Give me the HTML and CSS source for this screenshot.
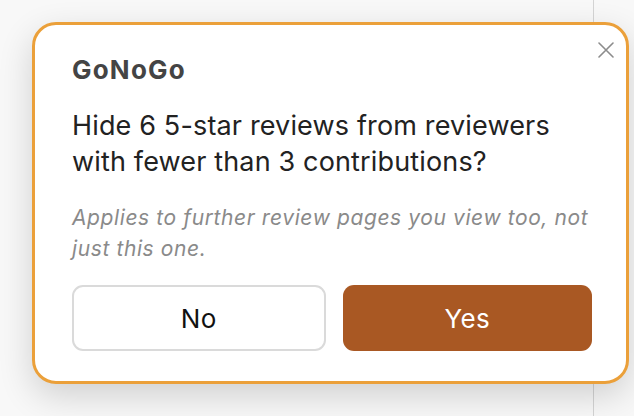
FILE: index.html
```html
<!DOCTYPE html>
<html lang="en">
<head>
<meta charset="utf-8">
<title>GoNoGo</title>
<link rel="stylesheet" href="styles.css">
</head>
<body>
<div class="page">
  <div class="page-main"></div>
  <div class="page-side"></div>
</div>
<div class="dialog" role="dialog">
  <button class="close" aria-label="Close">
    <svg width="16" height="16" viewBox="0 0 16 16"><path d="M1 1L15 15M15 1L1 15" stroke="#8c8c8c" stroke-width="1.6" stroke-linecap="round" fill="none"/></svg>
  </button>
  <div class="brand">GoNoGo</div>
  <p class="question">Hide 6 5-star reviews from reviewers with fewer than 3 contributions?</p>
  <p class="note">Applies to further review pages you view too, not just this one.</p>
  <div class="actions">
    <button class="btn btn-no">No</button>
    <button class="btn btn-yes">Yes</button>
  </div>
</div>
</body>
</html>
```
FILE: styles.css
```css
html, body {
  margin: 0;
  padding: 0;
  height: 100%;
}
body {
  background: #f8f8f8;
  font-family: Inter, "Noto Sans", sans-serif;
  overflow: hidden;
}
.page {
  display: flex;
  height: 416px;
}
.page-main {
  width: 593px;
  border-right: 1px solid #d4d4d4;
}
.page-side {
  flex: 1;
}
.dialog {
  position: absolute;
  left: 32px;
  top: 22px;
  width: 597px;
  box-sizing: border-box;
  background: #fff;
  border: 3px solid #eba03a;
  border-radius: 24px;
  padding: 30px 34px 30px 37px;
  box-shadow: 0 12px 34px rgba(0, 0, 0, 0.16);
}
.close {
  position: absolute;
  top: 17px;
  right: 12px;
  width: 16px;
  height: 16px;
  padding: 0;
  border: 0;
  background: none;
  display: flex;
}
.brand {
  font-size: 26px;
  line-height: 30px;
  font-weight: 700;
  letter-spacing: 1.2px;
  color: #444;
}
.question {
  margin: 23px 0 0;
  font-size: 27px;
  line-height: 36px;
  letter-spacing: 0.15px;
  color: #222;
}
.note {
  margin: 22px 0 0;
  font-size: 21px;
  line-height: 31px;
  letter-spacing: 0.6px;
  font-style: italic;
  color: #8a8a8a;
}
.actions {
  display: flex;
  gap: 17px;
  margin-top: 21px;
}
.btn {
  flex: 1;
  height: 66px;
  border-radius: 11px;
  font-family: Inter, "Noto Sans", sans-serif;
  font-size: 26px;
  letter-spacing: 0.3px;
}
.btn-no {
  background: #fff;
  border: 2px solid #dadada;
  color: #111;
}
.btn-yes {
  background: #a95823;
  border: 0;
  color: #fff;
}
```
